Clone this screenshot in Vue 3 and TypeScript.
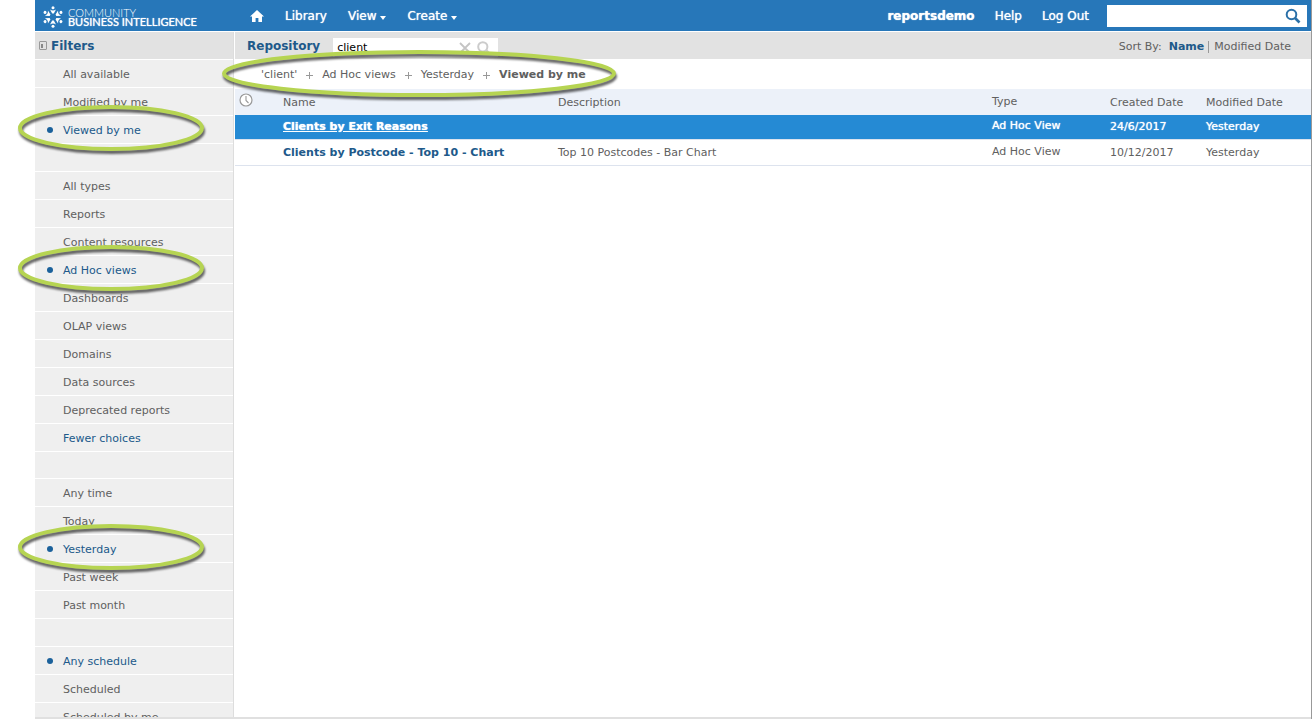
<script setup lang="ts">
import { ref } from 'vue'

interface FilterItem {
  label: string
  active?: boolean
  accent?: boolean
  ring?: boolean
}

interface Resource {
  name: string
  description: string
  type: string
  created: string
  modified: string
  selected?: boolean
}

const filterGroups: FilterItem[][] = [
  [
    { label: 'All available' },
    { label: 'Modified by me' },
    { label: 'Viewed by me', active: true, ring: true },
  ],
  [
    { label: 'All types' },
    { label: 'Reports' },
    { label: 'Content resources' },
    { label: 'Ad Hoc views', active: true, ring: true },
    { label: 'Dashboards' },
    { label: 'OLAP views' },
    { label: 'Domains' },
    { label: 'Data sources' },
    { label: 'Deprecated reports' },
    { label: 'Fewer choices', accent: true },
  ],
  [
    { label: 'Any time' },
    { label: 'Today' },
    { label: 'Yesterday', active: true, ring: true },
    { label: 'Past week' },
    { label: 'Past month' },
  ],
  [
    { label: 'Any schedule', active: true },
    { label: 'Scheduled' },
    { label: 'Scheduled by me' },
  ],
]

const crumbs = ["'client'", 'Ad Hoc views', 'Yesterday', 'Viewed by me']

const resources: Resource[] = [
  { name: 'Clients by Exit Reasons', description: '', type: 'Ad Hoc View', created: '24/6/2017', modified: 'Yesterday', selected: true },
  { name: 'Clients by Postcode - Top 10 - Chart', description: 'Top 10 Postcodes - Bar Chart', type: 'Ad Hoc View', created: '10/12/2017', modified: 'Yesterday' },
]

const rays = [0, 60, 120, 180, 240, 300]
const query = ref('client')
const globalQuery = ref('')
</script>

<template>
  <div class="app">
    <header class="topbar">
      <a class="logo" href="#" aria-label="Community Business Intelligence">
        <svg class="logo-mark" viewBox="-11 -11 22 22" aria-hidden="true">
          <g v-for="angle in rays" :key="angle" :transform="`rotate(${angle})`">
            <path d="M-3 -7.6 Q0 -5.4 3 -7.6 L0.8 -3.4 H-0.8Z" fill="#fff" />
            <circle cx="0" cy="-9.2" r="1.5" fill="#fff" />
          </g>
        </svg>
        <span class="logo-text">
          <span class="logo-light">COMMUNITY</span>
          <span class="logo-strong">BUSINESS INTELLIGENCE</span>
        </span>
      </a>
      <nav class="nav">
        <a href="#" class="home" aria-label="Home">
          <svg viewBox="0 0 14 12" aria-hidden="true">
            <path d="M7 0 L14 6.6 H12 V12 H8.4 V8 H5.6 V12 H2 V6.6 H0Z" fill="#fff" />
          </svg>
        </a>
        <a href="#">Library</a>
        <button type="button">View<i class="caret"></i></button>
        <button type="button">Create<i class="caret"></i></button>
      </nav>
      <div class="account">
        <span class="user">reportsdemo</span>
        <a href="#">Help</a>
        <a href="#">Log Out</a>
      </div>
      <div class="global-search">
        <input v-model="globalQuery" type="text" aria-label="Search repository" />
        <button type="button" aria-label="Search">
          <svg viewBox="0 0 16 16" aria-hidden="true">
            <circle cx="6.5" cy="6.5" r="4.8" fill="none" stroke="#2a70a8" stroke-width="2" />
            <path d="M10 10 L14.5 14.5" stroke="#2a70a8" stroke-width="2.6" />
          </svg>
        </button>
      </div>
    </header>

    <div class="body">
      <aside class="sidebar">
        <div class="panel-head">
          <button type="button" class="collapse" aria-label="Collapse filters"><i></i></button>
          <h2>Filters</h2>
        </div>
        <ul v-for="(group, g) in filterGroups" :key="g" class="filters">
          <li v-for="item in group" :key="item.label" :class="{ active: item.active, accent: item.accent }">
            <a href="#">{{ item.label }}</a>
            <svg v-if="item.ring" class="ring" viewBox="0 0 186 47" preserveAspectRatio="none" aria-hidden="true">
              <ellipse cx="93" cy="23" rx="91" ry="21" />
            </svg>
          </li>
        </ul>
      </aside>

      <main class="main">
        <div class="panel-head main-head">
          <h2>Repository</h2>
          <div class="search">
            <input v-model="query" type="text" aria-label="Search" />
            <button type="button" aria-label="Clear search">
              <svg viewBox="0 0 12 12" aria-hidden="true"><path d="M1 1 L11 11 M11 1 L1 11" stroke="#c4c4c4" stroke-width="1.8" /></svg>
            </button>
            <button type="button" aria-label="Run search">
              <svg class="glass" viewBox="0 0 14 14" aria-hidden="true">
                <circle cx="5.8" cy="5.8" r="4.6" fill="none" stroke="#ccc" stroke-width="2" />
                <path d="M9 9 L13 13" stroke="#ccc" stroke-width="2.4" />
              </svg>
            </button>
          </div>
          <div class="sort">
            <span class="sort-label">Sort By:</span>
            <a href="#" class="current">Name</a>
            <a href="#" class="other">Modified Date</a>
          </div>
        </div>

        <div class="crumbs">
          <template v-for="(crumb, i) in crumbs" :key="crumb">
            <svg v-if="i > 0" class="plus" viewBox="0 0 7 7" aria-hidden="true"><path d="M3 0h1v3h3v1h-3v3h-1v-3h-3v-1h3z" fill="#999" /></svg>
            <a href="#" :class="{ last: i === crumbs.length - 1 }">{{ crumb }}</a>
          </template>
          <svg class="ring ring-wide" viewBox="0 0 394 47" preserveAspectRatio="none" aria-hidden="true">
            <ellipse cx="197" cy="23.5" rx="195" ry="21.5" />
          </svg>
        </div>

        <table class="results">
          <colgroup>
            <col class="c-icon" /><col class="c-name" /><col /><col class="c-type" /><col class="c-created" /><col class="c-modified" />
          </colgroup>
          <thead>
            <tr>
              <th class="clock">
                <svg viewBox="0 0 14 14" aria-label="Scheduled">
                  <circle cx="7" cy="7" r="6" fill="#fff" stroke="#999" stroke-width="1.2" />
                  <path d="M7 3 V7.5 L9.5 10" fill="none" stroke="#999" stroke-width="1.1" />
                </svg>
              </th>
              <th>Name</th>
              <th>Description</th>
              <th class="type">Type</th>
              <th>Created Date</th>
              <th>Modified Date</th>
            </tr>
          </thead>
          <tbody>
            <tr v-for="r in resources" :key="r.name" :class="{ selected: r.selected }">
              <td></td>
              <td class="name"><a href="#">{{ r.name }}</a></td>
              <td>{{ r.description }}</td>
              <td class="type">{{ r.type }}</td>
              <td>{{ r.created }}</td>
              <td>{{ r.modified }}</td>
            </tr>
          </tbody>
        </table>
      </main>
    </div>
    <footer class="foot"></footer>
  </div>
</template>

<style>
body {
  background: #fff;
}
</style>

<style scoped>
.app {
  display: flex;
  flex-direction: column;
  height: 100vh;
  box-sizing: border-box;
  padding-left: 35px;
  border-right: 1px solid #999;
  overflow: hidden;
  font-family: Verdana, 'DejaVu Sans', sans-serif;
  font-size: 11px;
  line-height: 16px;
  color: #606060;
}
a {
  color: inherit;
  text-decoration: none;
}
button {
  display: flex;
  align-items: center;
  padding: 0;
  border: 0;
  background: none;
  font: inherit;
  color: inherit;
  text-shadow: inherit;
}
input {
  flex: 1;
  min-width: 0;
  padding: 0;
  border: 0;
  outline: 0;
  background: none;
  font: inherit;
  color: #000;
}
h2 {
  margin: 0;
  font-size: 12px;
  line-height: 16px;
  color: #20598a;
}

.topbar {
  flex: none;
  display: flex;
  align-items: center;
  height: 31px;
  background: #2777b9;
  color: #fff;
  font-size: 12px;
}
.logo {
  display: flex;
  align-items: center;
  gap: 4px;
  width: 200px;
  padding: 2px 0 0 7px;
  box-sizing: border-box;
}
.logo-mark {
  width: 22px;
  height: 22px;
}
.logo-text {
  display: flex;
  flex-direction: column;
  font-family: Lato, sans-serif;
  font-size: 11px;
  line-height: 9px;
  white-space: nowrap;
}
.logo-light {
  font-weight: 300;
}
.logo-strong {
  text-shadow: 0 0 1px #fff;
}
.nav {
  flex: 1;
  display: flex;
  align-items: center;
  gap: 21px;
  padding-left: 15px;
}
.nav,
.account {
  text-shadow: 0 0 1px #fff;
}
.home svg {
  display: block;
  width: 14px;
  height: 12px;
}
.caret {
  margin: 4px 0 0 4px;
  border: 3px solid transparent;
  border-top: 4px solid #fff;
  border-bottom: 0;
}
.account {
  display: flex;
  gap: 20px;
}
.user {
  font-weight: bold;
}
.global-search {
  display: flex;
  align-items: center;
  width: 200px;
  height: 22px;
  margin: 1px 4px 0 18px;
  padding: 0 6px;
  box-sizing: border-box;
  background: #fff;
}
.global-search svg {
  width: 16px;
  height: 16px;
}

.body {
  flex: 1;
  min-height: 0;
  display: flex;
  gap: 1px;
  padding-top: 1px;
}
.sidebar {
  flex: none;
  width: 198px;
  border-right: 1px solid #ddd;
}
.panel-head {
  display: flex;
  align-items: center;
  height: 27px;
  background: #e2e2e2;
}
.sidebar .panel-head {
  gap: 4px;
  padding-left: 4px;
}
.collapse {
  width: 8px;
  height: 9px;
  box-sizing: border-box;
  padding: 1px;
  border: 1px solid #999;
  border-radius: 1px;
}
.collapse i {
  width: 2px;
  height: 4px;
  background: #888;
}
.filters {
  margin: 0;
  padding: 0;
  list-style: none;
}
.filters + .filters::before {
  content: '';
  display: block;
  height: 27px;
  margin-top: 1px;
  background: #efefef;
}
.filters:nth-of-type(3)::before {
  height: 26px;
}
.filters li {
  position: relative;
  height: 27px;
  margin-top: 1px;
  padding-left: 28px;
  background: #efefef;
  line-height: 29px;
}
.filters .active,
.filters .accent {
  color: #20598a;
}
.filters .active::before {
  content: '';
  position: absolute;
  top: 11px;
  left: 12px;
  width: 6px;
  height: 6px;
  border-radius: 50%;
  background: #1b619b;
}
.ring {
  position: absolute;
  z-index: 2;
  top: -11px;
  left: -17px;
  width: 186px;
  height: 47px;
  overflow: visible;
  pointer-events: none;
  filter: drop-shadow(1px 3px 1px rgba(0, 0, 0, 0.6));
}
.ring ellipse {
  fill: none;
  stroke: #b6d452;
  stroke-width: 4;
}

.main {
  flex: 1;
  min-width: 0;
}
.main-head {
  padding: 0 20px 0 12px;
}
.search {
  display: flex;
  align-items: center;
  gap: 6px;
  width: 165px;
  height: 19px;
  margin: 4px 0 0 13px;
  padding: 0 7px 0 4px;
  box-sizing: border-box;
  background: #fff;
}
.search svg {
  display: block;
  width: 12px;
  height: 12px;
}
.search .glass {
  width: 14px;
  height: 14px;
}
.sort {
  display: flex;
  margin: 2px 0 0 auto;
}
.sort-label {
  margin-right: 7px;
}
.sort .current {
  font-weight: bold;
  color: #20598a;
}
.sort .other {
  align-self: center;
  margin-left: 4px;
  padding-left: 5px;
  border-left: 1px solid #999;
  line-height: 12px;
}
.crumbs {
  position: relative;
  display: flex;
  align-items: center;
  gap: 9px;
  height: 30px;
  padding-left: 26px;
}
.crumbs a {
  padding-top: 1px;
}
.plus {
  width: 7px;
  height: 7px;
  margin-top: 3px;
}
.crumbs .last {
  font-weight: bold;
}
.ring-wide {
  top: -9px;
  left: -13px;
  width: 394px;
}

.results {
  width: 100%;
  table-layout: fixed;
  border-collapse: collapse;
}
.c-icon {
  width: 48px;
}
.c-name {
  width: 275px;
}
.c-type {
  width: 118px;
}
.c-created {
  width: 96px;
}
.c-modified {
  width: 105px;
}
.results th,
.results td {
  box-sizing: border-box;
  padding: 2px 0 0;
  text-align: left;
  font-weight: normal;
  white-space: nowrap;
}
.results th {
  height: 26px;
  background: #ecf1f9;
}
.results .clock {
  padding: 0 0 4px 4px;
}
.clock svg {
  display: block;
  width: 14px;
  height: 14px;
}
.results td {
  height: 26px;
  border-bottom: 1px solid #dde3ee;
}
.results .name {
  font-weight: bold;
  color: #20598a;
}
.results .type {
  padding-top: 0;
}
.results .selected td {
  height: 24px;
  padding-top: 0;
  background: #258ad4;
  color: #fff;
  text-shadow: 0 0 1px #fff;
}
.results .selected .type {
  padding-bottom: 1px;
}
.selected .name a {
  text-decoration: underline;
}
.foot {
  flex: none;
  position: relative;
  height: 2px;
  background: #e0e0e0;
}
</style>
